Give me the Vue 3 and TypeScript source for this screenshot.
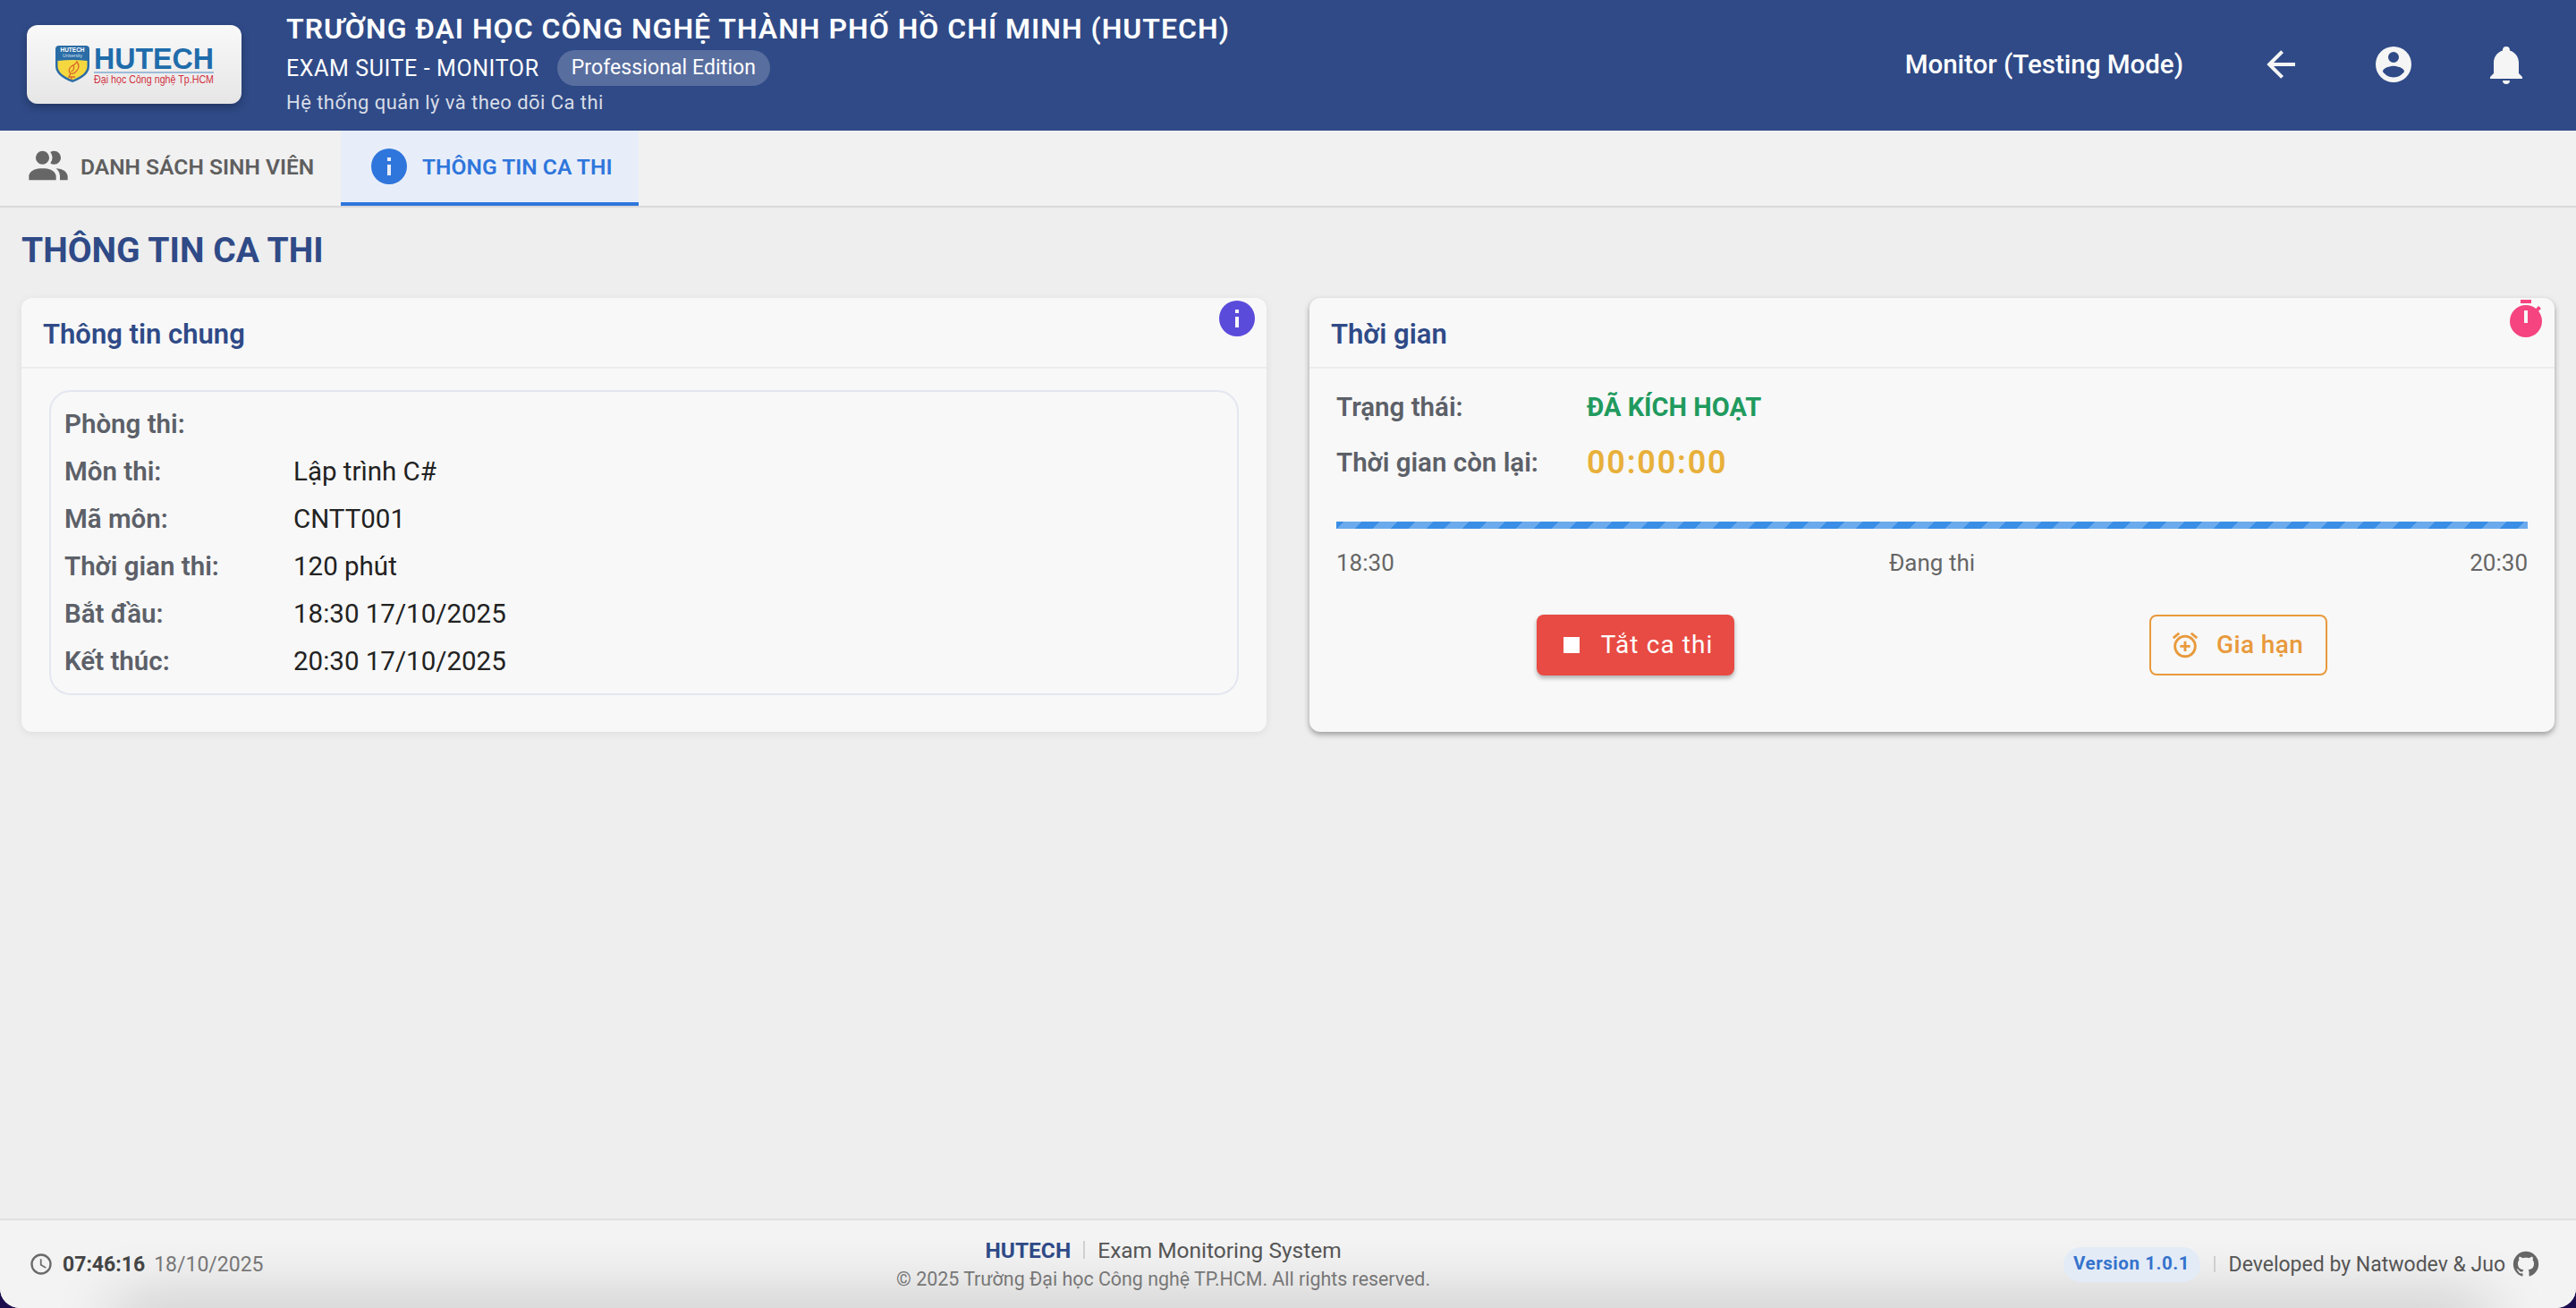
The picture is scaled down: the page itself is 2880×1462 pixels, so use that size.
<script setup lang="ts">
const infoRows: { label: string; value: string }[] = [
  { label: 'Phòng thi:', value: '' },
  { label: 'Môn thi:', value: 'Lập trình C#' },
  { label: 'Mã môn:', value: 'CNTT001' },
  { label: 'Thời gian thi:', value: '120 phút' },
  { label: 'Bắt đầu:', value: '18:30 17/10/2025' },
  { label: 'Kết thúc:', value: '20:30 17/10/2025' },
]
const icons = {
  back: 'M20,11V13H8L13.5,18.5L12.08,19.92L4.16,12L12.08,4.08L13.5,5.5L8,11H20Z',
  account: 'M12,19.2C9.5,19.2 7.29,17.92 6,16C6.03,14 10,12.9 12,12.9C14,12.9 17.97,14 18,16C16.71,17.92 14.5,19.2 12,19.2M12,5A3,3 0 0,1 15,8A3,3 0 0,1 12,11A3,3 0 0,1 9,8A3,3 0 0,1 12,5M12,2A10,10 0 0,0 2,12A10,10 0 0,0 12,22A10,10 0 0,0 22,12A10,10 0 0,0 12,2Z',
  bell: 'M21,19V20H3V19L5,17V11C5,7.9 7.03,5.17 10,4.29C10,4.19 10,4.1 10,4A2,2 0 0,1 12,2A2,2 0 0,1 14,4C14,4.1 14,4.19 14,4.29C16.97,5.17 19,7.9 19,11V17L21,19M14,21A2,2 0 0,1 12,23A2,2 0 0,1 10,21',
  people: 'M16 17V19H2V17S2 13 9 13 16 17 16 17M12.5 7.5A3.5 3.5 0 1 0 9 11A3.5 3.5 0 0 0 12.5 7.5M15.94 13A5.32 5.32 0 0 1 18 17V19H22V17S22 13.37 15.94 13M15 4A3.39 3.39 0 0 0 13.07 4.59A5 5 0 0 1 13.07 10.41A3.39 3.39 0 0 0 15 11A3.5 3.5 0 0 0 15 4Z',
  info: 'M13,9H11V7H13M13,17H11V11H13M12,2A10,10 0 0,0 2,12A10,10 0 0,0 12,22A10,10 0 0,0 22,12A10,10 0 0,0 12,2Z',
  timer: 'M19.03 7.39L20.45 5.97C20 5.46 19.55 5 19.04 4.56L17.62 6C16.07 4.74 14.12 4 12 4A9 9 0 0 0 3 13A9 9 0 0 0 12 22C17 22 21 17.97 21 13C21 10.88 20.26 8.93 19.03 7.39M13 14H11V7H13V14M15 1H9V3H15V1Z',
  alarm: 'M13,9H11V12H8V14H11V17H13V14H16V12H13M12,20A7,7 0 0,1 5,13A7,7 0 0,1 12,6A7,7 0 0,1 19,13A7,7 0 0,1 12,20M12,4A9,9 0 0,0 3,13A9,9 0 0,0 12,22A9,9 0 0,0 21,13A9,9 0 0,0 12,4M22,5.72L17.4,1.86L16.11,3.39L20.71,7.25M7.88,3.39L6.6,1.86L2,5.71L3.29,7.24L7.88,3.39Z',
  clock: 'M12,20A8,8 0 0,0 20,12A8,8 0 0,0 12,4A8,8 0 0,0 4,12A8,8 0 0,0 12,20M12,2A10,10 0 0,1 22,12A10,10 0 0,1 12,22C6.47,22 2,17.5 2,12A10,10 0 0,1 12,2M12.5,7V12.25L17,14.92L16.25,16.15L11,13V7H12.5Z',
  github: 'M12,2A10,10 0 0,0 2,12C2,16.42 4.87,20.17 8.84,21.5C9.34,21.58 9.5,21.27 9.5,21C9.5,20.77 9.5,20.14 9.5,19.31C6.73,19.91 6.14,17.97 6.14,17.97C5.68,16.81 5.03,16.5 5.03,16.5C4.12,15.88 5.1,15.9 5.1,15.9C6.1,15.97 6.63,16.93 6.63,16.93C7.5,18.45 8.97,18 9.54,17.76C9.63,17.11 9.89,16.67 10.17,16.42C7.95,16.17 5.62,15.31 5.62,11.5C5.62,10.39 6,9.5 6.65,8.79C6.55,8.54 6.2,7.5 6.75,6.15C6.75,6.15 7.59,5.88 9.5,7.17C10.29,6.95 11.15,6.84 12,6.84C12.85,6.84 13.71,6.95 14.5,7.17C16.41,5.88 17.25,6.15 17.25,6.15C17.8,7.5 17.45,8.54 17.35,8.79C18,9.5 18.38,10.39 18.38,11.5C18.38,15.32 16.04,16.16 13.81,16.41C14.17,16.72 14.5,17.33 14.5,18.26C14.5,19.6 14.5,20.68 14.5,21C14.5,21.27 14.66,21.59 15.17,21.5C19.14,20.16 22,16.42 22,12A10,10 0 0,0 12,2Z',
}
</script>

<template>
  <div class="page">
    <header class="topbar">
      <div class="logo">
        <svg viewBox="0 0 240 88" width="240" height="88">
          <path d="M36 23 H66 Q70 23 70 27 V46 Q70 57 51 64 Q32 57 32 46 V27 Q32 23 36 23 Z" fill="#2a6ca6" />
          <path d="M34.500 40 Q51 38 67.500 40 V46 Q67.500 55 51 61.500 Q34.500 55 34.500 46 Z" fill="#f5d83f" />
          <text x="51" y="30" text-anchor="middle" class="logo-tiny">HUTECH</text>
          <text x="51" y="35.500" text-anchor="middle" class="logo-tinier">University</text>
          <path d="M56 41 C59 45 58 49 55 52 C53 54 51 55 49 54 C46 52 47 48 50 46 C53 44 55 44 56 41 Z M52 45 C54 48 52 51 49.500 52" fill="none" stroke="#d8682b" stroke-width="1.300" />
          <path d="M49 54 L47 58 H54 M50 58 L50 61" fill="none" stroke="#d8682b" stroke-width="1.400" />
          <text x="75" y="49" class="logo-main" textLength="134" lengthAdjust="spacingAndGlyphs">HUTECH</text>
          <rect x="75" y="52" width="134" height="2" fill="#9dbcd9" />
          <text x="75" y="65" class="logo-sub" textLength="134" lengthAdjust="spacingAndGlyphs">Đại học Công nghệ Tp.HCM</text>
        </svg>
      </div>
      <div class="brand">
        <div class="brand-title">TRƯỜNG ĐẠI HỌC CÔNG NGHỆ THÀNH PHỐ HỒ CHÍ MINH (HUTECH)</div>
        <div class="brand-sub">
          <span>EXAM SUITE - MONITOR</span>
          <span class="edition">Professional Edition</span>
        </div>
        <div class="brand-desc">Hệ thống quản lý và theo dõi Ca thi</div>
      </div>
      <div class="top-right">
        <span class="role">Monitor (Testing Mode)</span>
        <div class="top-icons">
          <span class="top-icon"><svg viewBox="0 0 24 24" width="48" height="48"><path :d="icons.back" /></svg></span>
          <span class="top-icon"><svg viewBox="0 0 24 24" width="48" height="48"><path :d="icons.account" /></svg></span>
          <span class="top-icon"><svg viewBox="0 0 24 24" width="48" height="48"><path :d="icons.bell" /></svg></span>
        </div>
      </div>
    </header>

    <nav class="tabs">
      <div class="tab tab-people">
        <svg viewBox="0 0 24 24" width="52" height="52"><path :d="icons.people" /></svg>
        <span>DANH SÁCH SINH VIÊN</span>
      </div>
      <div class="tab tab-info">
        <svg viewBox="0 0 24 24" width="48" height="48"><path :d="icons.info" /></svg>
        <span>THÔNG TIN CA THI</span>
      </div>
    </nav>

    <main class="main">
      <h1 class="page-title">THÔNG TIN CA THI</h1>
      <div class="cards">
        <section class="card card-soft">
          <h2 class="card-title">Thông tin chung</h2>
          <svg class="corner corner-info" viewBox="0 0 24 24" width="48" height="48"><path :d="icons.info" /></svg>
          <div class="card-body">
            <div class="info-box">
              <div v-for="row in infoRows" :key="row.label" class="info-row">
                <span class="info-label">{{ row.label }}</span>
                <span class="info-value">{{ row.value }}</span>
              </div>
            </div>
          </div>
        </section>

        <section class="card card-raised">
          <h2 class="card-title">Thời gian</h2>
          <svg class="corner corner-timer" viewBox="0 0 24 24" width="48" height="48"><path :d="icons.timer" /></svg>
          <div class="card-body time-body">
            <div class="time-row">
              <span class="time-label">Trạng thái:</span>
              <span class="status">ĐÃ KÍCH HOẠT</span>
            </div>
            <div class="time-row second">
              <span class="time-label">Thời gian còn lại:</span>
              <span class="countdown">00:00:00</span>
            </div>
            <div class="progress"></div>
            <div class="scale">
              <span>18:30</span>
              <span>Đang thi</span>
              <span>20:30</span>
            </div>
            <div class="actions">
              <button class="btn btn-stop" type="button">
                <span class="stop-mark"></span>
                <span>Tắt ca thi</span>
              </button>
              <button class="btn btn-extend" type="button">
                <svg viewBox="0 0 24 24" width="34" height="34"><path :d="icons.alarm" /></svg>
                <span>Gia hạn</span>
              </button>
            </div>
          </div>
        </section>
      </div>
    </main>

    <footer class="footer">
      <div class="foot-left">
        <svg viewBox="0 0 24 24" width="28" height="28"><path :d="icons.clock" /></svg>
        <strong class="clock-time">07:46:16</strong>
        <span class="clock-date">18/10/2025</span>
      </div>
      <div class="foot-center">
        <div class="foot-line">
          <strong class="foot-brand">HUTECH</strong>
          <span class="foot-sep"></span>
          <span>Exam Monitoring System</span>
        </div>
        <div class="foot-copy">© 2025 Trường Đại học Công nghệ TP.HCM. All rights reserved.</div>
      </div>
      <div class="foot-right">
        <span class="version">Version 1.0.1</span>
        <span class="foot-divider"></span>
        <span class="dev">Developed by Natwodev &amp; Juo</span>
        <svg viewBox="0 0 24 24" width="34" height="34"><path :d="icons.github" /></svg>
      </div>
    </footer>
  </div>
</template>

<style>
html, body { background: #1d0d4f; }
</style>

<style scoped>
.page {
  width: 2880px;
  height: 1462px;
  display: flex;
  flex-direction: column;
  overflow: hidden;
  background: #eeeeee;
  border-radius: 0 0 22px 22px;
  font-family: Roboto, "Noto Sans", sans-serif;
  color: #222;
}
.topbar {
  height: 146px;
  flex: none;
  display: flex;
  background: #2f4a87;
  color: #fff;
  padding: 0 30px;
}
.logo {
  width: 240px;
  height: 88px;
  margin-top: 28px;
  border-radius: 12px;
  background: linear-gradient(180deg, #f9f9f9, #e6e6e6);
  box-shadow: 0 4px 10px rgba(0, 0, 0, .25);
}
.logo svg { display: block; }
.logo-tiny { font: 700 6.500px "Liberation Sans", sans-serif; fill: #fff; }
.logo-tinier { font: 400 5px "Liberation Sans", sans-serif; fill: #d7e4f0; }
.logo-main { font: 700 34px "Liberation Sans", sans-serif; fill: #1f6cab; }
.logo-sub { font: 400 13px "Liberation Sans", sans-serif; fill: #d2323f; }
.brand {
  margin-left: 50px;
  padding-top: 12px;
  display: flex;
  flex-direction: column;
}
.brand-title {
  height: 40px;
  line-height: 40px;
  font-size: 32px;
  font-weight: 600;
  letter-spacing: 1px;
  white-space: nowrap;
}
.brand-sub {
  margin-top: 4px;
  height: 40px;
  display: flex;
  align-items: center;
  gap: 20px;
  font-size: 25px;
  letter-spacing: .6px;
}
.edition {
  height: 40px;
  line-height: 40px;
  padding: 0 16px;
  border-radius: 20px;
  background: rgba(255, 255, 255, .2);
  font-size: 23px;
  letter-spacing: .1px;
}
.brand-desc {
  margin-top: 4px;
  height: 30px;
  line-height: 30px;
  font-size: 22px;
  color: rgba(255, 255, 255, .82);
  letter-spacing: .45px;
}
.top-right {
  margin-left: auto;
  margin-right: 24px;
  height: 144px;
  display: flex;
  align-items: center;
}
.role {
  font-size: 29.500px;
  font-weight: 500;
  margin-right: 85px;
}
.top-icons {
  display: flex;
  gap: 78px;
}
.top-icon {
  width: 48px;
  height: 48px;
}
.top-icon svg { display: block; fill: #f5f5f5; }
.tabs {
  height: 84px;
  flex: none;
  display: flex;
  background: #f1f1f1;
  border-bottom: 2px solid #d9d9d9;
}
.tab {
  box-sizing: border-box;
  display: flex;
  align-items: center;
  padding-bottom: 4px;
  font-size: 24.600px;
  font-weight: 600;
  white-space: nowrap;
}
.tab-people {
  width: 381px;
  padding-left: 28px;
  gap: 10px;
  color: #5f5f5f;
}
.tab-people svg { fill: #666; }
.tab-info {
  width: 333px;
  padding-bottom: 0;
  padding-left: 30px;
  gap: 13px;
  color: #2f76dc;
  background: #e8eef9;
  border-bottom: 4px solid #2f76dc;
}
.tab-info svg { fill: #2f76dc; }
.main {
  flex: 1;
  min-height: 0;
  padding: 26px 24px 0;
}
.page-title {
  margin: 0 0 31px;
  height: 44px;
  line-height: 44px;
  font-size: 39px;
  font-weight: 700;
  color: #2f4a87;
}
.cards {
  display: grid;
  grid-template-columns: 1fr 1fr;
  gap: 48px;
}
.card {
  position: relative;
  height: 485px;
  background: #f8f8f8;
  border-radius: 12px;
  display: flex;
  flex-direction: column;
}
.card-soft { box-shadow: 0 2px 10px rgba(0, 0, 0, .07); }
.card-raised { box-shadow: 0 3px 6px rgba(0, 0, 0, .35); }
.card-title {
  flex: none;
  box-sizing: content-box;
  margin: 0;
  height: 76px;
  padding: 1px 24px 0;
  line-height: 79px;
  font-size: 31px;
  font-weight: 600;
  color: #2f4a87;
  border-bottom: 2px solid #ececec;
}
.corner {
  position: absolute;
  top: -1px;
}
.corner-info { right: 9px; fill: #5b4bdb; }
.corner-timer { right: 8px; top: 0; fill: #f5447f; }
.card-body {
  flex: 1;
  min-height: 0;
  padding: 24px 31px 41px;
}
.info-box {
  height: 100%;
  box-sizing: border-box;
  padding: 9px 15px 10px;
  border: 2px solid #e4e6f0;
  border-radius: 24px;
}
.info-row {
  display: flex;
  height: 53px;
  align-items: center;
  font-size: 29.500px;
}
.info-label {
  width: 256px;
  flex: none;
  font-weight: 600;
  color: #5c6068;
}
.info-value {
  font-weight: 400;
  color: #222;
}
.time-body {
  padding: 17px 30px 0;
}
.time-row {
  display: flex;
  align-items: center;
  height: 52px;
  font-size: 29.500px;
}
.time-row.second { margin-top: 10px; }
.time-label {
  width: 280px;
  flex: none;
  font-weight: 600;
  color: #5c6068;
}
.status {
  font-size: 29px;
  font-weight: 700;
  color: #219a5e;
}
.countdown {
  font-size: 36px;
  font-weight: 600;
  letter-spacing: 1.800px;
  color: #e8b03a;
}
.progress {
  margin-top: 40px;
  height: 8px;
  background-color: #3a8ee6;
  background-image: linear-gradient(135deg, rgba(255, 255, 255, .25) 25%, transparent 0, transparent 50%, rgba(255, 255, 255, .25) 0, rgba(255, 255, 255, .25) 75%, transparent 0, transparent);
  background-size: 40px 40px;
  background-position: 9px 0;
}
.scale {
  margin-top: 20px;
  height: 36px;
  line-height: 36px;
  display: flex;
  justify-content: space-between;
  font-size: 26px;
  color: #666;
}
.actions {
  margin-top: 40px;
  display: flex;
  justify-content: space-around;
  gap: 16px;
}
.btn {
  height: 68px;
  box-sizing: border-box;
  display: inline-flex;
  align-items: center;
  padding-bottom: 2px;
  border-radius: 8px;
  font-family: inherit;
  font-size: 28px;
  cursor: pointer;
}
.btn-stop {
  padding-left: 30px;
  padding-right: 24px;
  gap: 24px;
  border: none;
  background: #e84b43;
  color: #fff;
  font-weight: 400;
  letter-spacing: 1.100px;
  box-shadow: 0 3px 5px rgba(0, 0, 0, .3);
}
.stop-mark {
  width: 18px;
  height: 18px;
  background: #fff;
}
.btn-extend {
  padding-left: 21px;
  padding-right: 25px;
  gap: 18px;
  border: 2px solid #e89a3c;
  background: transparent;
  color: #e89a3c;
  font-weight: 500;
  letter-spacing: .4px;
}
.btn-extend svg { fill: #e89a3c; }
.footer {
  position: relative;
  height: 98px;
  flex: none;
  display: flex;
  justify-content: space-between;
  align-items: center;
  padding: 0 39px 0 32px;
  background: #f3f3f3;
  border-top: 2px solid #e0e0e0;
  overflow: hidden;
}
.footer::after {
  content: "";
  position: absolute;
  left: 130px;
  right: 100px;
  bottom: -30px;
  height: 30px;
  box-shadow: 0 0 70px 0 rgba(0, 0, 0, .32);
}
.foot-left {
  display: flex;
  align-items: center;
  gap: 10px;
  position: relative;
  z-index: 1;
}
.foot-left svg { fill: #6a6a6a; }
.clock-time {
  font-size: 23px;
  font-weight: 700;
  color: #444;
}
.clock-date {
  font-size: 23px;
  color: #777;
}
.foot-center {
  position: relative;
  z-index: 1;
  display: flex;
  flex-direction: column;
  align-items: center;
}
.foot-line {
  display: flex;
  align-items: center;
  height: 34px;
  font-size: 24.500px;
  color: #555;
}
.foot-brand {
  color: #2f4a87;
  font-weight: 700;
}
.foot-sep {
  width: 2px;
  height: 20px;
  margin: 0 14px;
  background: #d0d0d0;
}
.foot-copy {
  font-size: 21.400px;
  color: #777;
  height: 32px;
  line-height: 32px;
}
.foot-right {
  position: relative;
  z-index: 1;
  display: flex;
  align-items: center;
  justify-content: flex-end;
}
.foot-right svg { fill: #666; margin-left: 6px; }
.version {
  height: 39px;
  line-height: 37px;
  padding: 0 11.500px;
  border-radius: 20px;
  background: #e3ebf7;
  color: #3573cc;
  font-size: 20.500px;
  font-weight: 700;
  letter-spacing: .55px;
}
.foot-divider {
  width: 2px;
  height: 18px;
  margin: 0 15px;
  background: #cfcfcf;
}
.dev {
  font-size: 23px;
  color: #555;
}
</style>
